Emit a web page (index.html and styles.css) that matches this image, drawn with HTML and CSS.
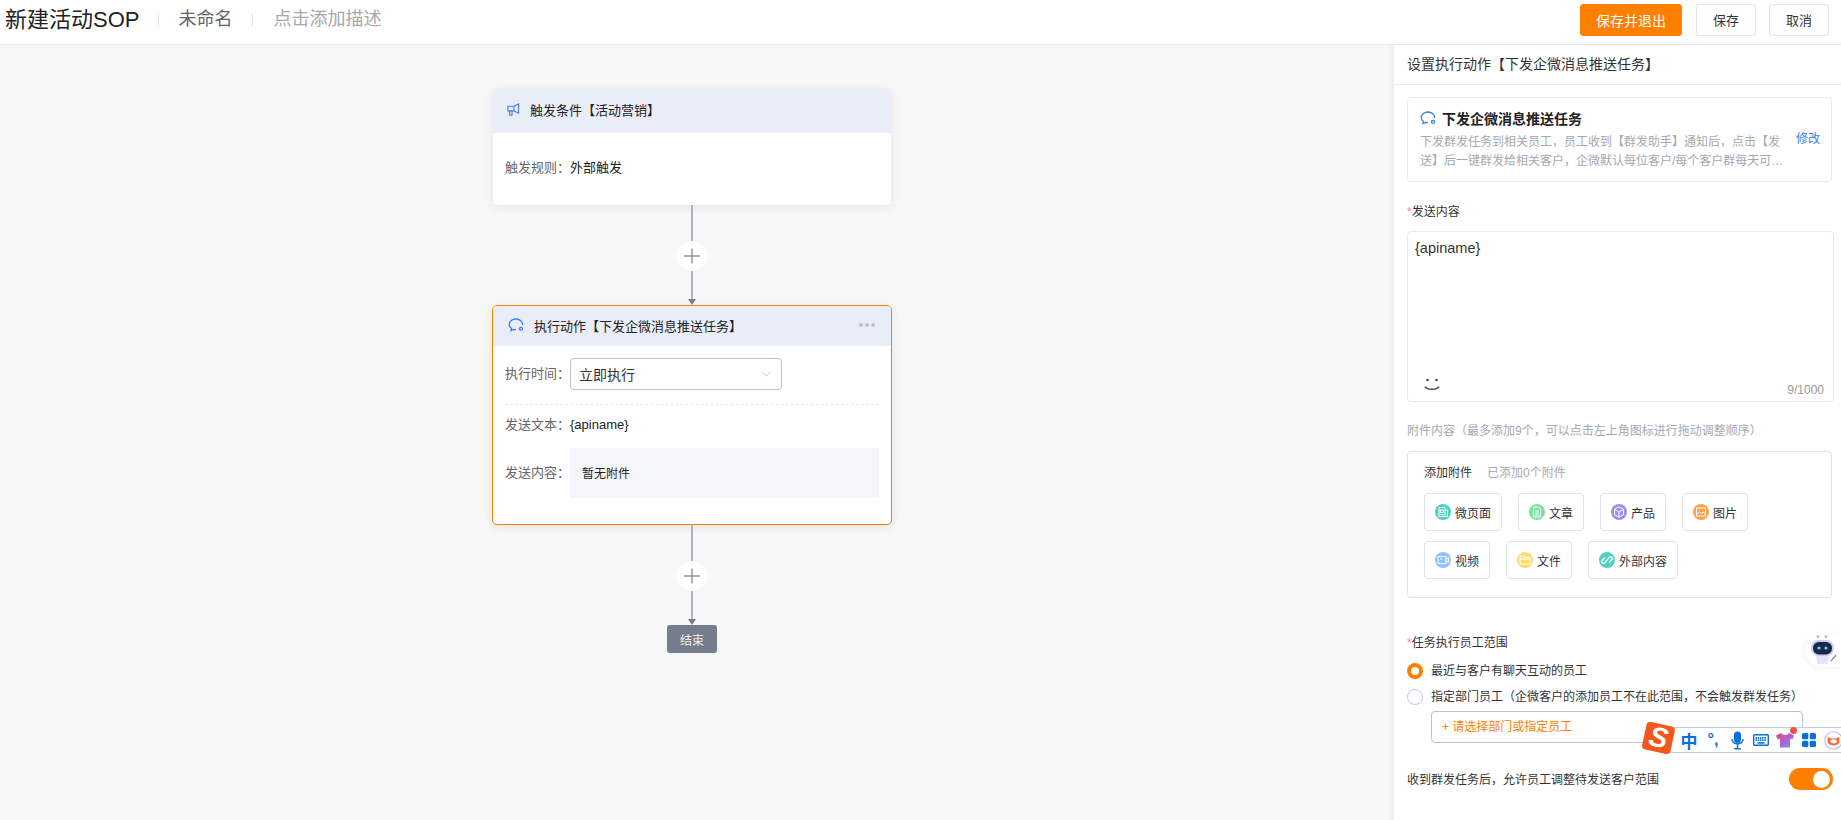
FILE: index.html
```html
<!DOCTYPE html>
<html lang="zh-CN">
<head>
<meta charset="utf-8">
<title>新建活动SOP</title>
<link rel="stylesheet" href="styles.css">
</head>
<body>
<header class="topbar">
  <div class="topbar-left">
    <h1 class="page-title">新建活动SOP</h1>
    <span class="sep"></span>
    <span class="page-name">未命名</span>
    <span class="sep sep-second"></span>
    <span class="page-desc">点击添加描述</span>
  </div>
  <div class="topbar-actions">
    <button class="btn btn-primary">保存并退出</button>
    <button class="btn">保存</button>
    <button class="btn">取消</button>
  </div>
</header>
<main class="main">
  <section class="canvas">
    <div class="card card-trigger">
      <div class="card-head">
        <svg class="ico-mega" viewBox="0 0 14 14" fill="none" stroke="#3f7cf6" stroke-width="1.2"><path d="M1 3.500h6.500v5H1zM7.500 3.500L12.500 1v10L7.500 8.500M2.800 8.500V13h2.600V8.500"/></svg>
        <span>触发条件【活动营销】</span>
      </div>
      <div class="card-body-trigger">
        <span class="field-label">触发规则：</span><span class="field-value">外部触发</span>
      </div>
    </div>

    <div class="connector">
      <span class="line line-a"></span>
      <span class="plus"><svg viewBox="0 0 16 16" width="16" height="16" fill="none" stroke="#8b93a3" stroke-width="1.4"><path d="M8 .5v15M.5 8h15"/></svg></span>
      <span class="line line-b"></span>
      <span class="arrow"></span>
    </div>

    <div class="card card-action">
      <div class="card-head card-head-action">
        <svg class="ico-bubble" viewBox="0 0 16 14" fill="none" stroke="#3f7cf6" stroke-width="1.3"><path d="M14.800 7C14.800 3.700 11.700 1 8 1S1.200 3.400 1.200 6.400c0 1.700.9 3.100 2.300 4.100L3 12.600l2.600-1.200c.8.200 1.600.3 2.400.3"/><circle cx="13" cy="10.800" r="1.500"/></svg>
        <span class="head-text">执行动作【下发企微消息推送任务】</span>
        <span class="dots"><i></i><i></i><i></i></span>
      </div>
      <div class="action-body">
        <div class="row row-select">
          <span class="field-label">执行时间：</span>
          <div class="select">
            <span>立即执行</span>
            <svg viewBox="0 0 12 7" width="11" height="6" fill="none" stroke="#bfc2cc" stroke-width="1.1"><path d="M.7.7L6 6l5.300-5.300"/></svg>
          </div>
        </div>
        <div class="dashed"></div>
        <div class="row row-text">
          <span class="field-label">发送文本：</span><span class="field-value">{apiname}</span>
        </div>
        <div class="row row-attach">
          <span class="field-label">发送内容：</span>
          <div class="no-attach">暂无附件</div>
        </div>
      </div>
    </div>

    <div class="connector">
      <span class="line line-a"></span>
      <span class="plus"><svg viewBox="0 0 16 16" width="16" height="16" fill="none" stroke="#8b93a3" stroke-width="1.4"><path d="M8 .5v15M.5 8h15"/></svg></span>
      <span class="line line-b"></span>
      <span class="arrow"></span>
    </div>
    <div class="end-node">结束</div>
  </section>

  <aside class="panel">
    <div class="panel-title">设置执行动作【下发企微消息推送任务】</div>
    <div class="panel-body">
      <div class="task-card">
        <div class="task-main">
          <div class="task-title">
            <svg class="ico-bubble" viewBox="0 0 16 14" fill="none" stroke="#3f7cf6" stroke-width="1.3"><path d="M14.800 7C14.800 3.700 11.700 1 8 1S1.200 3.400 1.200 6.400c0 1.700.9 3.100 2.300 4.100L3 12.600l2.600-1.200c.8.200 1.600.3 2.400.3"/><circle cx="13" cy="10.800" r="1.500"/></svg>
            <strong>下发企微消息推送任务</strong>
          </div>
          <p class="task-desc">下发群发任务到相关员工，员工收到【群发助手】通知后，点击【发送】后一键群发给相关客户，企微默认每位客户/每个客户群每天可接收1条群发消息，超出部分将无法送达客户</p>
        </div>
        <a class="task-edit">修改</a>
      </div>

      <div class="form-label form-label-send"><em>*</em>发送内容</div>
      <div class="textarea">
        <div class="textarea-text">{apiname}</div>
        <div class="textarea-foot">
          <svg class="smile" viewBox="0 0 16 14" width="16" height="14" fill="none" stroke="#4a4a4a"><circle cx="3.500" cy="2" r="1.300" fill="#4a4a4a" stroke="none"/><circle cx="12.500" cy="2" r="1.300" fill="#4a4a4a" stroke="none"/><path d="M1 8.500c2 3.800 12 3.800 14 0" stroke-width="1.500"/></svg>
          <span class="counter">9/1000</span>
        </div>
      </div>

      <div class="form-label form-label-muted">附件内容（最多添加9个，可以点击左上角图标进行拖动调整顺序）</div>
      <div class="attach-box">
        <div class="attach-head"><span>添加附件</span><span class="attach-count">已添加0个附件</span></div>
        <div class="attach-list">
          <button class="att"><span class="att-ico c-teal"><svg viewBox="0 0 16 16" fill="none" stroke="#fff"><path d="M4 3.500h6v9H4zM10 6h2.500v6.500H10M5.500 6h3v2.500h-3zM5.500 10.500h3"/></svg></span>微页面</button>
          <button class="att"><span class="att-ico c-green"><svg viewBox="0 0 16 16" fill="none" stroke="#fff"><path d="M4.500 3h5l2 2v8h-7zM6 7h4M6 9h4M6 11h4"/></svg></span>文章</button>
          <button class="att"><span class="att-ico c-purple"><svg viewBox="0 0 16 16" fill="none" stroke="#fff"><path d="M8 2.800l4.500 2.500v5.400L8 13.200l-4.500-2.500V5.300zM3.500 5.300L8 8l4.500-2.700M8 8v5.200"/></svg></span>产品</button>
          <button class="att"><span class="att-ico c-orange"><svg viewBox="0 0 16 16" fill="none" stroke="#fff"><path d="M3.500 4h9v8h-9zM3.500 10.500l3-2.500 2 1.500 1.500-1.500 2.500 2M6 6.500h.8"/></svg></span>图片</button>
          <button class="att"><span class="att-ico c-blue"><svg viewBox="0 0 16 16" fill="none" stroke="#fff"><path d="M3 4.500h8v7H3zM11 7l2.500-1.200v4.400L11 9M5 7h2"/></svg></span>视频</button>
          <button class="att"><span class="att-ico c-yellow"><svg viewBox="0 0 16 16" fill="none" stroke="#fff"><path d="M3 4h4l1 1.500h5V12H3zM3 7h10"/></svg></span>文件</button>
          <button class="att"><span class="att-ico c-teal"><svg viewBox="0 0 16 16" fill="none" stroke="#fff" stroke-width="1.300"><path d="M7 9.500l-1.500 1.500a1.800 1.800 0 01-2.500-2.500L6 5.500M9 6.500L10.500 5A1.800 1.800 0 0113 7.500L10 10.500M6.500 9.500l3-3"/></svg></span>外部内容</button>
        </div>
      </div>

      <div class="form-label form-label-task"><em>*</em>任务执行员工范围</div>
      <div class="radio-row radio-row-first"><span class="radio radio-on"></span>最近与客户有聊天互动的员工</div>
      <div class="radio-row radio-row-second"><span class="radio"></span>指定部门员工（企微客户的添加员工不在此范围，不会触发群发任务）</div>
      <div class="staff-input">+ 请选择部门或指定员工</div>
      <div class="switch-row">
        <span class="switch-label">收到群发任务后，允许员工调整待发送客户范围</span>
        <span class="switch"><i></i></span>
      </div>
    </div>
  </aside>
</main>

<div class="robot">
  <svg viewBox="0 0 30 32" width="30" height="32">
    <circle cx="10" cy="2.500" r="1.300" fill="#a99cf5"/><circle cx="18" cy="2.500" r="1.300" fill="#a99cf5"/>
    <path d="M8 22h13l-1.500 8h-10z" fill="#dfe6fb"/>
    <rect x="3" y="6" width="23" height="16" rx="7.500" fill="#c9cdf2"/>
    <rect x="5" y="8" width="19" height="12.500" rx="6" fill="#1d2744"/>
    <circle cx="11" cy="14" r="1.600" fill="#58d5ee"/><circle cx="18" cy="14" r="1.600" fill="#58d5ee"/>
    <path d="M23 27l5-6" stroke="#8a7cf0" stroke-width="1.200"/>
  </svg>
</div>

<div class="ime">
  <span class="ime-logo">S</span>
  <span class="ime-item ime-zh">中</span>
  <span class="ime-item ime-punct">°,</span>
  <span class="ime-item"><svg viewBox="0 0 14 20" width="13" height="19" fill="none" stroke="#0a6fd6" stroke-width="1.600"><rect x="4" y="1" width="6" height="11" rx="3" fill="#0a6fd6"/><path d="M1 8.500c0 7 12 7 12 0M7 14.500V19M3.500 19h7"/></svg></span>
  <span class="ime-item"><svg viewBox="0 0 16 12" width="16" height="12"><rect x=".7" y=".7" width="14.600" height="10.600" rx="1" fill="none" stroke="#0a6fd6" stroke-width="1.400"/><path d="M2.500 3.800h11M2.500 6.200h11" stroke="#0a6fd6" stroke-width="1.700" stroke-dasharray="1.500 .7"/><path d="M4.500 8.900h7" stroke="#0a6fd6" stroke-width="1.600"/></svg></span>
  <span class="ime-item ime-shirt"><svg viewBox="0 0 18 16" width="18" height="16"><defs><linearGradient id="shirt" x1="0" y1="0" x2="1" y2="1"><stop offset="0" stop-color="#e8505b"/><stop offset=".55" stop-color="#b05fe0"/><stop offset="1" stop-color="#58aef5"/></linearGradient></defs><path d="M5 1L0 3.500l1.500 4L4 6.500V15.500h10V6.500l2.500 1L18 3.500 13 1c-1 2.500-7 2.500-8 0z" fill="url(#shirt)"/></svg><i class="ime-dot"></i></span>
  <span class="ime-item"><svg viewBox="0 0 14 14" width="14" height="14" fill="#0a6fd6"><rect width="6.300" height="6.300" rx="1.500"/><rect x="7.700" width="6.300" height="6.300" rx="1.500"/><rect y="7.700" width="6.300" height="6.300" rx="1.500"/><rect x="7.700" y="7.700" width="6.300" height="6.300" rx="1.500"/></svg></span>
  <span class="ime-item"><svg viewBox="0 0 18 18" width="19" height="19"><circle cx="9" cy="9" r="8.200" fill="#fff" stroke="#c3aee8"/><path d="M3.500 5.500l3 1.500h5l3-1.500V11c-1 3.500-10 3.500-11 0z" fill="#f4683c"/><rect x="6" y="8" width="6" height="3.500" rx="1.500" fill="#fff"/></svg></span>
</div>
</body>
</html>
```
FILE: styles.css
```css
* { box-sizing: border-box; }
html, body { margin: 0; height: 820px; overflow: hidden; }
body {
  font-family: "Liberation Sans", "Noto Sans CJK SC", sans-serif;
  font-size: 12px;
  color: #333;
  background: #fff;
  display: flex;
  flex-direction: column;
  position: relative;
}

/* top bar */
.topbar {
  height: 45px;
  flex: none;
  display: flex;
  justify-content: space-between;
  align-items: center;
  padding: 0 12px 5px 5px;
  border-bottom: 1px solid #e8eaf2;
}
.topbar-left { display: flex; align-items: center; }
.page-title { margin: 0; font-size: 22px; font-weight: 400; line-height: 30px; color: #222; }
.sep { width: 1px; height: 14px; background: #dfe1e8; margin: 0 19px; }
.sep-second { margin: 0 20px; }
.page-name { font-size: 18px; line-height: 24px; color: #666; margin-top: -1px; }
.page-desc { font-size: 18px; line-height: 24px; color: #a5a8b0; margin-top: -1px; }
.topbar-actions { display: flex; gap: 13px; }
.btn {
  width: 60px;
  height: 32px;
  padding: 0;
  font: inherit;
  font-size: 13px;
  color: #333;
  background: #fff;
  border: 1px solid #e1e3ea;
  border-radius: 3px;
}
.btn-primary {
  width: 102px;
  margin-right: 1px;
  font-size: 14px;
  color: #fff;
  background: #ff8000;
  border-color: #ff8000;
}

.main { flex: 1; display: flex; min-height: 0; }

/* canvas */
.canvas {
  flex: 1;
  min-width: 0;
  background: #f7f7f7;
  display: flex;
  flex-direction: column;
  align-items: center;
  padding: 43px 10px 0 0;
  font-size: 13px;
}
.card { background: #fff; border-radius: 4px; box-shadow: 0 2px 10px rgba(0, 0, 0, .08); overflow: hidden; }
.card-trigger { width: 398px; height: 117px; }
.card-head {
  height: 45px;
  display: flex;
  align-items: center;
  gap: 10px;
  padding: 0 0 2px 14px;
  background: #e9edf8;
  color: #222;
}
.ico-mega { width: 13px; height: 13px; flex: none; }
.ico-bubble { width: 16px; height: 14px; flex: none; }
.card-body-trigger {
  height: 72px;
  display: flex;
  align-items: center;
  padding: 0 0 2px 12px;
}
.field-label { width: 65px; flex: none; color: #666; line-height: 20px; }
.field-value { color: #222; line-height: 20px; }

.connector { display: flex; flex-direction: column; align-items: center; }
.line { width: 2px; background: #b0b4c0; display: block; }
.line-a { height: 36px; }
.line-b { height: 29px; }
.plus {
  width: 30px;
  height: 30px;
  border-radius: 50%;
  background: #fff;
  display: flex;
  align-items: center;
  justify-content: center;
}
.arrow {
  width: 0;
  height: 0;
  border-left: 4px solid transparent;
  border-right: 4px solid transparent;
  border-top: 6px solid #767e8e;
  margin-top: -1px;
}

.card-action { width: 400px; height: 220px; border: 1px solid #ff8000; border-radius: 5px; }
.card-head-action { height: 40px; padding: 0 16px 2px 15px; gap: 10px; }
.head-text { flex: 1; }
.dots { display: flex; gap: 2px; }
.dots i { width: 4px; height: 4px; border-radius: 50%; background: #bfc2cc; }
.action-body { padding: 12px 12px 0; }
.row { display: flex; align-items: center; }
.select {
  width: 212px;
  height: 32px;
  display: flex;
  align-items: center;
  justify-content: space-between;
  padding: 0 9px 0 8px;
  border: 1px solid #bdbfcb;
  border-radius: 4px;
  font-size: 14px;
  color: #333;
}
.dashed { margin-top: 14px; border-top: 1px dashed #e6e8ee; }
.row-text { margin-top: 10px; height: 20px; }
.no-attach {
  flex: 1;
  height: 50px;
  padding: 0 0 2px 12px;
  display: flex;
  align-items: center;
  background: #f5f6fa;
  font-size: 12px;
  color: #222;
}
.row-attach { margin-top: 13px; }

.end-node {
  width: 50px;
  height: 28px;
  display: flex;
  align-items: center;
  justify-content: center;
  border-radius: 3px;
  background: #767e8e;
  color: #eef0f4;
  font-size: 12px;
}

/* panel */
.panel {
  width: 447px;
  flex: none;
  background: #fff;
  box-shadow: -3px 0 6px rgba(0, 0, 0, .05);
}
.panel-title {
  height: 40px;
  padding: 0 0 3px 13px;
  display: flex;
  align-items: center;
  font-size: 14px;
  color: #333;
  border-bottom: 1px solid #e8eaf2;
}
.panel-body { padding: 12px 7px 0 13px; }
.task-card {
  width: 425px;
  height: 85px;
  display: flex;
  align-items: center;
  padding: 0 9px 0 12px;
  border: 1px solid #e8eaf2;
  border-radius: 4px;
}
.task-main { width: 365px; flex: none; }
.task-title { display: flex; align-items: center; gap: 6px; height: 20px; font-size: 14px; color: #222; }
.task-desc {
  margin: 5px 0 0;
  line-height: 19px;
  color: #a5a8b0;
  display: -webkit-box;
  -webkit-box-orient: vertical;
  -webkit-line-clamp: 2;
  overflow: hidden;
}
.task-edit { margin: -4px 0 0 11px; color: #3f7cf6; white-space: nowrap; }

.form-label { margin-top: 19px; line-height: 20px; color: #333; }
.form-label em { color: #ff8585; font-style: normal; }
.form-label-send { margin: 20px 0 -1px; }
.form-label-muted { color: #a5a8b0; }
.form-label-task { margin-top: 35px; }

.textarea {
  width: 427px;
  height: 171px;
  margin-top: 10px;
  display: flex;
  flex-direction: column;
  justify-content: space-between;
  padding: 6px 9px 0 7px;
  border: 1px solid #e8eaf2;
  border-radius: 4px;
}
.textarea-text { font-size: 14.5px; line-height: 20px; color: #333; }
.textarea-foot { display: flex; justify-content: space-between; align-items: flex-end; height: 20px; }
.smile { margin: 0 0 9px 9px; flex: none; }
.counter { line-height: 20px; color: #999; margin-bottom: 1px; }

.attach-box {
  width: 425px;
  height: 147px;
  margin-top: 10px;
  padding: 11px 16px 0;
  border: 1px solid #dfe1ea;
  border-radius: 4px;
}
.attach-head { display: flex; gap: 15px; line-height: 20px; color: #333; margin-bottom: 10px; }
.attach-count { color: #a5a8b0; }
.attach-list { display: flex; flex-wrap: wrap; gap: 10px 16px; }
.att {
  height: 38px;
  display: flex;
  align-items: center;
  gap: 4px;
  padding: 0 10px;
  font: inherit;
  color: #333;
  background: #fff;
  border: 1px solid #e1e3ea;
  border-radius: 4px;
}
.att-ico { width: 16px; height: 16px; border-radius: 50%; display: block; flex: none; }
.att-ico svg { display: block; width: 16px; height: 16px; }
.c-teal { background: #4fd1c5; }
.c-green { background: #7ddfa6; }
.c-purple { background: #9b8ff2; }
.c-orange { background: #ffa04d; }
.c-blue { background: #8cc3ff; }
.c-yellow { background: #ffdc6b; }

.radio-row { display: flex; align-items: center; gap: 8px; line-height: 20px; color: #333; }
.radio-row-first { margin-top: 8px; }
.radio-row-second { margin-top: 6px; }
.radio { width: 16px; height: 16px; border-radius: 50%; border: 1px solid #c5c8d2; flex: none; }
.radio-on { border: 4.5px solid #ff8000; }
.staff-input {
  width: 372px;
  height: 32px;
  margin: 4px 0 0 24px;
  padding: 0 0 3px 10px;
  display: flex;
  align-items: center;
  border: 1px solid #bdbfcb;
  border-radius: 4px;
  color: #ff8000;
}
.switch-row {
  width: 426px;
  height: 22px;
  margin-top: 25px;
  display: flex;
  align-items: center;
  justify-content: space-between;
  color: #333;
}
.switch-label { margin-top: -2px; }
.switch {
  width: 44px;
  height: 22px;
  padding: 2.5px 3px;
  border-radius: 11px;
  background: #ff8000;
  display: flex;
  justify-content: flex-end;
}
.switch i { width: 17px; height: 17px; border-radius: 50%; background: #fff; }

/* floating overlays */
.robot {
  position: absolute;
  top: 633px;
  right: 0;
  width: 36px;
  height: 34px;
  padding: 1px 0 0 3px;
  background: #fff;
  border-radius: 17px 0 0 17px;
  box-shadow: -1px 1px 5px rgba(0, 0, 0, .06);
}
.robot svg { display: block; }
.ime {
  position: absolute;
  top: 727px;
  left: 1665px;
  width: 176px;
  height: 26px;
  display: flex;
  align-items: center;
  padding-left: 11px;
  background: #fff;
  border: 1px solid #bcd0ea;
  border-right: 0;
}
.ime-logo {
  position: absolute;
  left: -22px;
  top: -4px;
  width: 29px;
  height: 28px;
  display: flex;
  align-items: center;
  justify-content: center;
  border-radius: 4px;
  background: #f4571d;
  color: #fff;
  font: italic 700 28px "Liberation Sans", sans-serif;
  transform: rotate(12deg);
}
.ime-item {
  width: 24px;
  height: 24px;
  flex: none;
  display: flex;
  align-items: center;
  justify-content: center;
  position: relative;
  color: #0a6fd6;
}
.ime-zh { font-size: 17px; font-weight: 700; }
.ime-punct { font-size: 16px; font-weight: 700; }
.ime-dot {
  position: absolute;
  top: -1px;
  right: 0;
  width: 7px;
  height: 7px;
  border-radius: 50%;
  background: #f0523f;
}
```
